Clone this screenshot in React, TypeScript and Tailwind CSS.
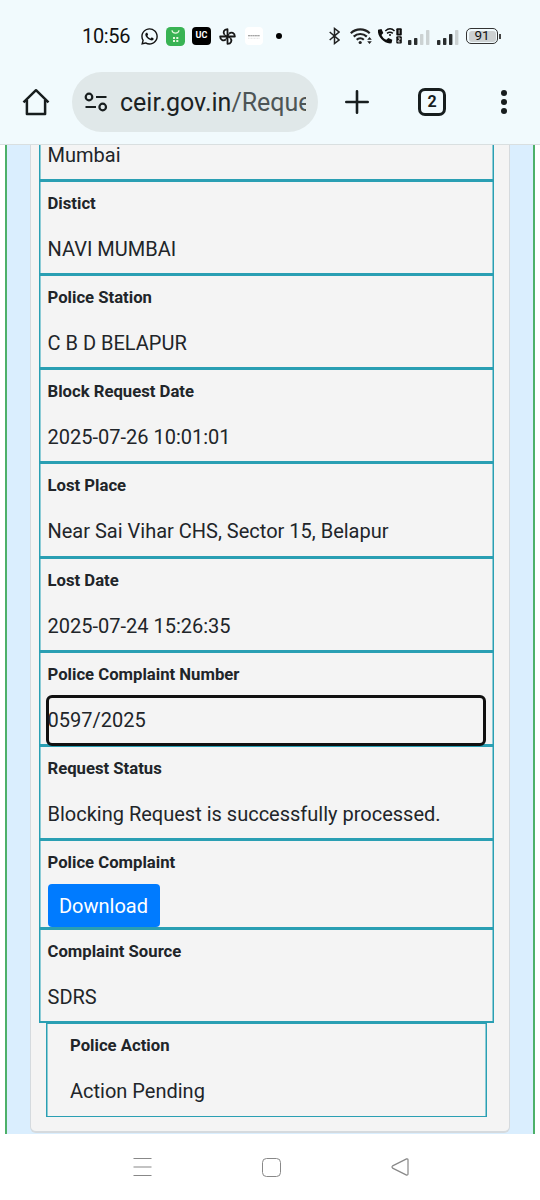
import { FaWhatsapp } from 'react-icons/fa';
import clsx from 'clsx';

interface Field {
  label: string;
  value: string;
  height: string;
  kind?: 'focused' | 'button';
}

const fields: Field[] = [
  { label: 'Distict', value: 'NAVI MUMBAI', height: 'h-[94px] border-b-3' },
  { label: 'Police Station', value: 'C B D BELAPUR', height: 'h-[94px] border-b-3' },
  { label: 'Block Request Date', value: '2025-07-26 10:01:01', height: 'h-[94px] border-b-3' },
  { label: 'Lost Place', value: 'Near Sai Vihar CHS, Sector 15, Belapur', height: 'h-[95px] border-b-3' },
  { label: 'Lost Date', value: '2025-07-24 15:26:35', height: 'h-[94px] border-b-3' },
  { label: 'Police Complaint Number', value: '0597/2025', height: 'h-[94px] border-b-3', kind: 'focused' },
  { label: 'Request Status', value: 'Blocking Request is successfully processed.', height: 'h-[94px] border-b-3' },
  { label: 'Police Complaint', value: 'Download', height: 'h-[89px] border-b-3', kind: 'button' },
  { label: 'Complaint Source', value: 'SDRS', height: 'h-[93px] border-b-2' },
];

const cellBorder = 'border-x border-[#2a9fb3] shadow-[inset_1px_0_0_#8ccbd5,inset_-1px_0_0_#8ccbd5]';

function Signal({ active }: { active: number }) {
  return (
    <svg className="w-[22px] h-4" viewBox="0 0 22 16">
      {[5, 7, 11, 15].map((h, i) => (
        <rect key={h} x={i * 6} y={16 - h} width="3.4" height={h} rx="0.8" fill={i < active ? '#2a2d2e' : '#ccd2d3'} />
      ))}
    </svg>
  );
}

function StatusBar() {
  return (
    <div className="flex h-[72px] items-center text-[#111]">
      <span className="ml-[82px] w-[58px] text-[20px] leading-6 tracking-[-0.35px]">10:56</span>
      <FaWhatsapp className="size-[19px]" />
      {/* Delivery app */}
      <svg className="ml-[7px] size-[19px]" viewBox="0 0 19 19">
        <rect width="19" height="19" rx="4.5" fill="#39b354" />
        <path d="M6 3.2c.4 3.8 6.6 3.8 7 0" fill="none" stroke="#e9f8df" strokeWidth="1.2" />
        <path d="M7 10h2v2H7zM10.3 10h2v2h-2zM7 13h2v2H7zM10.3 13h2v2h-2z" fill="#e9f8df" />
      </svg>
      <span className="ml-[7px] flex h-[18px] w-[19px] items-center justify-center rounded-[4px] bg-black text-[9px] font-bold text-white">UC</span>
      {/* Photos pinwheel */}
      <svg className="ml-2 size-[17px]" viewBox="0 0 18 18" fill="none" stroke="#171717" strokeWidth="1.9" strokeLinejoin="round">
        <path d="M9 9V1.2C5 1.2 3.800 5 6 7.300M9 9h7.8c0-4-3.800-5.200-6.100-3M9 9v7.8c4 0 5.200-3.800 3-6.100M9 9H1.2c0 4 3.800 5.200 6.100 3" />
        <path d="M6 7.300 9 9l1.700-3M12 10.700 9 9l-1.700 3" strokeWidth="1.2" />
      </svg>
      <svg className="ml-[9px] h-[18px] w-[18px]" viewBox="0 0 18 18">
        <rect width="18" height="18" rx="4" fill="#fff" />
        <path d="M3 8.700h12" stroke="#888" strokeWidth="1.100" strokeDasharray="2 .3" />
        <path d="M3 11.300h12" stroke="#ccc" strokeWidth=".6" strokeDasharray="1 .5" />
      </svg>
      <span className="ml-[13px] size-[6px] rounded-full bg-black" />

      <svg className="ml-[47px] h-[18px] w-[11px]" viewBox="0 0 11 18" fill="none" stroke="#222" strokeWidth="1.500">
        <path d="M.7 5 10 13l-4.500 3.500v-15L10 5 .7 13" />
      </svg>
      <svg className="ml-[10px] h-[18px] w-[23px]" viewBox="0 0 23 18" fill="none" stroke="#222" strokeWidth="2.200">
        <path d="M.8 6.300a13.500 13.500 0 0 1 18.900 0M3.700 9.600a9.500 9.500 0 0 1 13.100 0M6.700 12.800a5.200 5.200 0 0 1 7.100 0" />
        <circle cx="10.200" cy="15.500" r="1.600" fill="#222" stroke="none" />
        <path d="m19.500 10 2.300 2.800h-4.600zM19.500 17l2.300-2.800h-4.600z" fill="#222" stroke="none" />
      </svg>
      <svg className="ml-[4px] h-[18px] w-[26px]" viewBox="0 0 26 18" fill="none">
        <path d="M1 2.800 4.500 2l1.800 4L4.500 8c1 2.300 2.500 3.800 4.800 4.800l2-1.800 4 1.800-.8 3.500C8 17.500 0 10 1 2.800z" fill="#0d0d0d" />
        <path d="M8.300 4c3-2.700 6.500-2.700 9.200 0M10 6.400c2-1.600 3.900-1.600 5.800 0" stroke="#0d0d0d" strokeWidth="1.500" />
        <circle cx="13" cy="8" r="1" fill="#0d0d0d" />
        <rect x="19.300" y="1.200" width="5.500" height="7.200" rx="1" fill="#0d0d0d" />
        <rect x="19.300" y="9.300" width="5.500" height="7.200" rx="1" fill="#0d0d0d" />
        <path d="M22.100 2.800v4M21 11h2v1.600l-2 1v1.300h2.200" stroke="#fff" strokeWidth=".8" />
      </svg>
      <div className="ml-[5px] flex gap-[7px] pt-px">
        <Signal active={2} />
        <Signal active={3} />
      </div>
      <div className="ml-[7px] flex h-[16px] w-[32px] items-center rounded-[5px] border border-[#333] p-[1.500px]">
        <span className="flex h-full w-full items-center justify-center rounded-[3px] bg-[#cdd1d2] text-[13.500px] leading-none">91</span>
      </div>
      <span className="ml-px h-[5px] w-[1.500px] bg-[#444]" />
    </div>
  );
}

function BrowserBar() {
  return (
    <div className="flex h-[72px] items-start">
      <svg className="ml-[22px] mt-[16px] h-[29px] w-[28px]" viewBox="0 0 28 29" fill="none" stroke="#171d1e" strokeWidth="2.500" strokeLinejoin="round">
        <path d="M1.500 14.300 14 2.200l12.500 12.100M4.900 12v14h18.200V12" />
      </svg>
      <div className="ml-[22px] flex h-[60px] w-[246px] items-center rounded-full bg-[#e0e8e9]">
        <svg className="ml-[12px] h-[20px] w-[24px]" viewBox="0 0 24 20" fill="none" stroke="#171d1e" strokeWidth="2.200">
          <circle cx="5" cy="5" r="3.300" />
          <path d="M12 5h10.500M1.500 15H12" />
          <circle cx="18.700" cy="15" r="3.300" />
        </svg>
        <div className="ml-[12px] mt-[2px] w-[186px] overflow-hidden whitespace-nowrap text-[25px] leading-8 text-[#1b2223]">
          ceir.gov.in<span className="text-[#4d5556]">/Reque</span>
        </div>
      </div>
      <svg className="ml-[27px] mt-[18px] size-[24px]" viewBox="0 0 24 24" stroke="#171d1e" strokeWidth="2.600" strokeLinecap="round">
        <path d="M12 1.300v21.400M1.300 12h21.400" />
      </svg>
      <span className="ml-[49px] mt-[16px] flex h-[28px] w-[28px] items-center justify-center rounded-[7px] border-3 border-[#171d1e] text-[16px] font-bold leading-none text-[#171d1e]">
        2
      </span>
      <span className="ml-[55px] mt-[18px] flex flex-col gap-[3px]">
        <i className="size-[6px] rounded-full bg-[#171d1e]" />
        <i className="size-[6px] rounded-full bg-[#171d1e]" />
        <i className="size-[6px] rounded-full bg-[#171d1e]" />
      </span>
    </div>
  );
}

function FieldRow({ label, value, height, kind }: Field) {
  return (
    <div className={clsx('px-[7.5px] pt-[10px]', cellBorder, height)}>
      <div className="h-6 text-[16.7px] font-bold leading-6">{label}</div>
      {kind === 'button' ? (
        <button className="mt-[9px] block h-[43px] w-[112px] rounded-[4px] bg-[#007bff] text-[20px] leading-[42px] text-white">
          {value}
        </button>
      ) : kind === 'focused' ? (
        <div className="relative -ml-[1.5px] mt-[8px] h-[51px] w-[440px] rounded-[6px] border-3 border-[#101010] bg-[#f4f4f4] text-[20px] leading-[45px]">
          <span className="-ml-[1.5px]">{value}</span>
        </div>
      ) : (
        <div className="mt-[13px] text-[20px] leading-[40px]">{value}</div>
      )}
    </div>
  );
}

export default function App() {
  return (
    <div className="flex h-[1200px] w-[540px] flex-col overflow-hidden bg-white font-['Roboto',sans-serif] text-[#212529]">
      <header className="h-[145px] shrink-0 border-b border-[#d9dfe0] bg-[#f1fafd]">
        <StatusBar />
        <BrowserBar />
      </header>

      <main className="ml-[5px] flex h-[989px] w-[530px] shrink-0 border-x-2 border-[#4db069] bg-[#daeefe] pl-[23px]">
        <div className="h-[988px] w-[480px] rounded-b-[6px] border-x border-b-2 border-[#d5dade] bg-[#f4f4f4] px-[8px]">
          <div className={clsx('h-[37px] w-[455px] border-b-3 px-[7.5px] text-[20px] leading-[20px]', cellBorder)}>Mumbai</div>
          <div className="w-[455px]">
            {fields.map((field) => (
              <FieldRow key={field.label} {...field} />
            ))}
          </div>
          <div className={clsx('ml-[7px] h-[94px] w-[441px] border-t border-b px-[23px] pt-[10px]', cellBorder)}>
            <div className="h-6 text-[16.7px] font-bold leading-6">Police Action</div>
            <div className="mt-[13px] text-[20px] leading-[40px]">Action Pending</div>
          </div>
        </div>
      </main>

      {/* System navigation */}
      <nav className="flex h-[66px] items-center pl-[133px]">
        <svg className="h-[20px] w-[20px]" viewBox="0 0 20 20" stroke="#888" strokeWidth="1.200">
          <path d="M.5 1.500h18M.5 10h18M.5 18.500h18" />
        </svg>
        <span className="ml-[109px] size-[19px] rounded-[4.500px] border border-[#888]" />
        <svg className="ml-[110px] h-[18px] w-[18px]" viewBox="0 0 18 18" fill="none" stroke="#888" strokeWidth="1.200" strokeLinejoin="round">
          <path d="M15.600.9 1.600 7.900q-1.200 1.100 0 2.200l14 7q1.400.1 1.400-1.100V2q0-1.300-1.400-1.100z" />
        </svg>
      </nav>
    </div>
  );
}
